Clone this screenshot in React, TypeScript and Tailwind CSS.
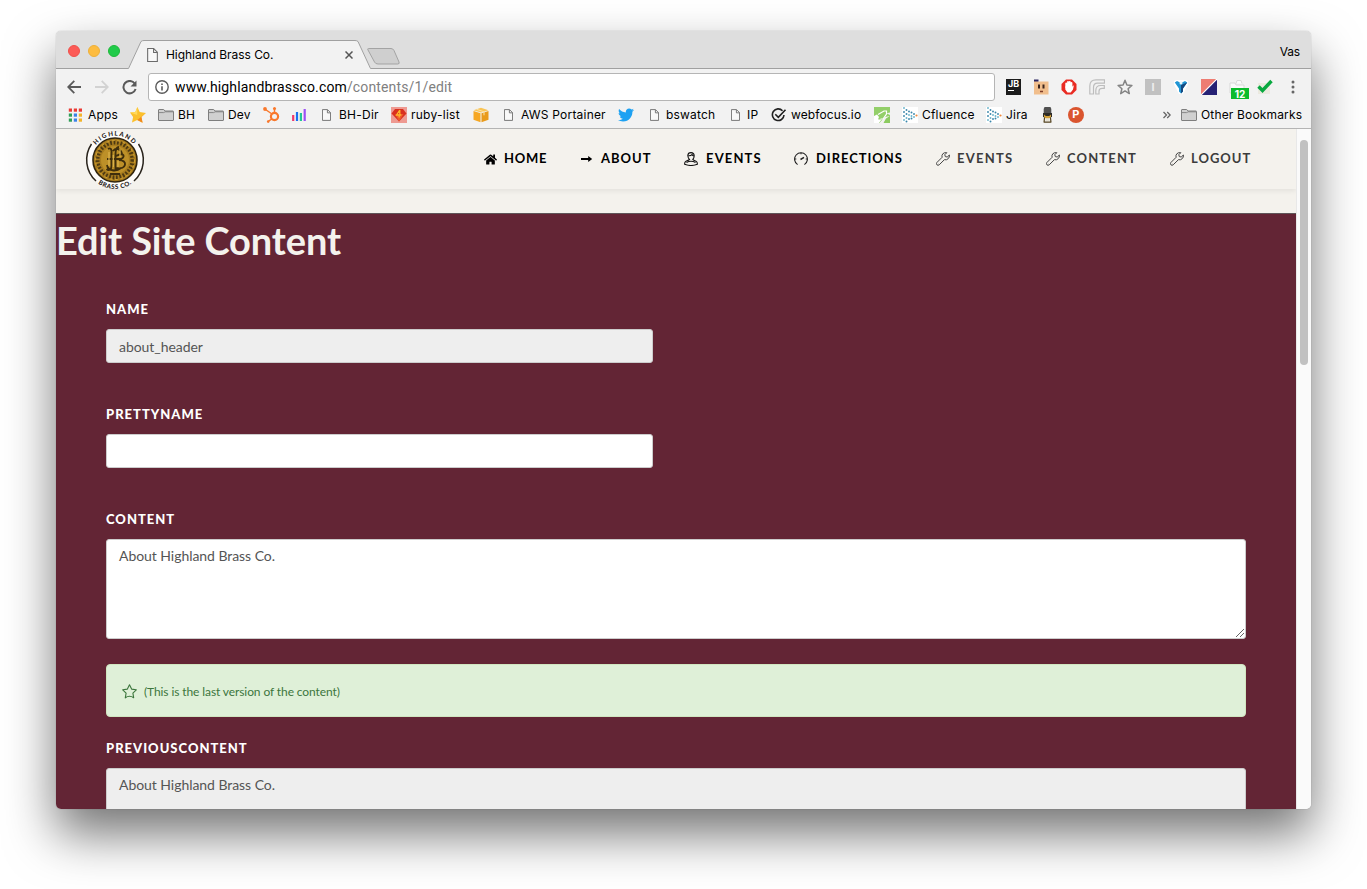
import React from "react";
import { FaHome, FaTwitter } from "react-icons/fa";

const PageIcon = ({ className }: { className: string }) => (
  <svg className={className} viewBox="0 0 10 13" fill="#f8f8f8" stroke="#6b6b6b" strokeWidth="1">
    <path d="M.5.5h5.6l3.4 3.4v8.6H.5z" />
    <path d="M6 .7v3.4h3.4" fill="none" />
  </svg>
);

const FolderIcon = () => (
  <svg className="h-4 w-4" viewBox="0 0 16 16">
    <path d="M.5 13V3Q.5 2.5 1 2.5h4.4q.6 0 .9.6l.5.9H15q.5 0 .5.5V13q0 .5-.5.5H1q-.5 0-.5-.5z" fill="#d0d0d0" stroke="#7e7e7e" />
    <path d="M1 5.6h4.6q.6 0 1-.4l.5-.4H15" fill="none" stroke="#7e7e7e" strokeWidth=".9" />
  </svg>
);

const AppsIcon = () => (
  <svg className="h-[14px] w-[14px]" viewBox="0 0 14 14">
    {["#ea3a34", "#ea3a34", "#ea3a34", "#2f9e58", "#3b82e8", "#f3b42a", "#2f9e58", "#3b82e8", "#f3b42a"].map((c, i) => (
      <rect key={i} x={(i % 3) * 5 + 0.8} y={Math.floor(i / 3) * 5 + 0.5} width="3.2" height="3.2" fill={c} />
    ))}
  </svg>
);

const StarIcon = () => (
  <svg className="h-4 w-4" viewBox="0 0 16 16">
    <path d="M7.4 0l2.3 5 6.3.9-4.6 4 1.2 5.9-5.4-2.7L2 15.6l1.1-5.5L0 5.4l5.3-.5z" fill="#fbc02c" />
    <path d="M16 5.9l-4.6 4 1.2 5.9-5.4-2.7z" fill="#f08a1c" />
    <path d="M7.4 0l-.2 8L0 5.4l5.3-.5z" fill="#ffd95a" />
  </svg>
);

const HubIcon = () => (
  <svg className="h-4 w-[17px]" viewBox="0 0 17 16" fill="none" stroke="#f9782c">
    <circle cx="11.5" cy="9.500" r="3.600" strokeWidth="2.200" />
    <path d="M2.500 2.500L9 7M11.500 1.500V6M5 14.500L9 11.800" strokeWidth="1.500" />
    <g fill="#f9782c" stroke="none">
      <circle cx="2" cy="2" r="1.900" />
      <circle cx="11.500" cy="1.600" r="1.500" />
      <circle cx="5.200" cy="14.600" r="1.300" />
    </g>
  </svg>
);

const BarsIcon = () => (
  <svg className="h-4 w-[14px]" viewBox="0 0 14 16">
    <path d="M1.200 8v6" stroke="#f0386b" strokeWidth="2.200" />
    <path d="M5 5v9" stroke="#1a6ff0" strokeWidth="2.200" />
    <path d="M8.900 6v8" stroke="#20c796" strokeWidth="2.200" />
    <path d="M12.700 2v12" stroke="#9b50f5" strokeWidth="2.200" />
  </svg>
);

const RubyIcon = () => (
  <svg className="h-4 w-4" viewBox="0 0 16 16">
    <rect width="16" height="16" fill="#ee9a92" />
    <path d="M4 2h8l3.500 4.500L8 14.500.500 6.500z" fill="#d9301f" />
    <path d="M4 7l4 7.500L12.500 7z" fill="#ee5a2c" />
    <path d="M8.800 3L5.500 8h2.700v2.500M8.800 3v5h1.500" fill="none" stroke="#ffb428" strokeWidth="1.300" />
  </svg>
);

const CubeIcon = () => (
  <svg className="h-4 w-4" viewBox="0 0 16 16">
    <path d="M.5 3.200L8 .8l7.500 2.400L8 5.600z" fill="#f9c455" />
    <path d="M.5 4l7 2.200v9L.5 12.800z" fill="#f6a723" />
    <path d="M15.500 4l-7 2.200v9l7-2.400z" fill="#e99b1c" />
    <path d="M3.500 2.300l7.500 2.500v3.500" fill="none" stroke="#fbe3ab" strokeWidth="1" />
  </svg>
);

const CheckRing = () => (
  <svg className="h-4 w-4" viewBox="0 0 16 16" fill="none" stroke="#222" strokeWidth="1.600">
    <path d="M11.500 3.800A5.800 5.800 0 1 0 13 8" />
    <path d="M4.300 7.300l3 3L14.500 2.700" />
  </svg>
);

const GreenIcon = () => (
  <svg className="h-4 w-4" viewBox="0 0 16 16">
    <path d="M0 0h16v5.500l-3.500.8L16 8v8h-6l1.500-3L16 9l-5 1-3.500 3.500L5.500 16H2l2.500-3.500L0 9z" fill="#93cf69" />
    <path d="M0 9l3-1.500 2 2.500-1 2.500h3.500L5 16H0z" fill="#fff" />
    <path d="M16 9l-4 2.500L9.500 16H16z" fill="#8ccb61" />
    <path d="M4 7.500l6-3.500h2.500v3L9 12H6.500" fill="none" stroke="#fff" strokeWidth="1.200" />
  </svg>
);

const DotsIcon = () => (
  <svg className="h-4 w-4" viewBox="0 0 16 16">
    <rect width="16" height="16" fill="#fff" />
    {[
      [2, 1], [2, 5], [2, 9], [2, 13], [4.5, 3], [4.5, 7], [4.5, 11], [4.5, 14.5], [7, 4.5], [7, 8], [7, 12], [9.5, 5.5], [9.5, 9], [9.5, 11.5], [12, 7], [12, 10],
    ].map(([x, y], i) => (
      <circle key={i} cx={x} cy={y} r=".95" fill={i % 3 ? "#3a86ab" : "#69b4cc"} />
    ))}
    <circle cx="14.500" cy="8.500" r="1.100" fill="#f0883a" />
  </svg>
);

const LampIcon = () => (
  <svg className="h-4 w-[11px]" viewBox="0 0 11 16">
    <path d="M2.500 0h6l.8 2v5h-7.600V2z" fill="#505050" />
    <path d="M1 6h9v3.500L8.500 11h-6L1 9.500z" fill="#2d2b26" />
    <path d="M2 7.500l1.800 1.500h3.400L9 7.500V10l-2 1.500H4L2 10z" fill="#d2a03a" />
    <path d="M3.500 11.500h4v2.500h-4z" fill="#e8e2d2" />
    <path d="M2.500 11l-.5 4.500M8.500 11l.5 4.500M2 15.200h7" fill="none" stroke="#54431f" strokeWidth="1.200" />
  </svg>
);

const PIcon = () => (
  <div className="flex h-4 w-4 items-center justify-center rounded-full bg-[#da552f] text-[11px] leading-none font-bold text-white">P</div>
);

type Bookmark = { slot: string; icon: React.ReactNode; label?: string; text?: string };

const bookmarks: Bookmark[] = [
  { slot: "w-[62px]", icon: <AppsIcon />, label: "Apps", text: "ml-[6px]" },
  { slot: "w-[28px]", icon: <StarIcon /> },
  { slot: "w-[50px]", icon: <FolderIcon />, label: "BH", text: "ml-[4px]" },
  { slot: "w-[55px]", icon: <FolderIcon />, label: "Dev", text: "ml-[4px]" },
  { slot: "w-[29px]", icon: <HubIcon /> },
  { slot: "w-[30px]", icon: <BarsIcon /> },
  { slot: "w-[69px]", icon: <PageIcon className="h-3 w-[9px]" />, label: "BH-Dir", text: "ml-[8px] tracking-[0.25px]" },
  { slot: "w-[82px]", icon: <RubyIcon />, label: "ruby-list", text: "ml-[4px] tracking-[0.25px]" },
  { slot: "w-[31px]", icon: <CubeIcon /> },
  { slot: "w-[114px]", icon: <PageIcon className="h-3 w-[9px]" />, label: "AWS Portainer", text: "ml-[8px]" },
  { slot: "w-[32px]", icon: <FaTwitter className="h-4 w-4 text-[#1da1f2]" /> },
  { slot: "w-[81px]", icon: <PageIcon className="h-3 w-[9px]" />, label: "bswatch", text: "ml-[7px]" },
  { slot: "w-[40px]", icon: <PageIcon className="h-3 w-[9px]" />, label: "IP", text: "ml-[7px]" },
  { slot: "w-[103px]", icon: <CheckRing />, label: "webfocus.io", text: "ml-[4px] tracking-[0.1px]" },
  { slot: "w-[28px]", icon: <GreenIcon /> },
  { slot: "w-[84px]", icon: <DotsIcon />, label: "Cfluence", text: "ml-[4px]" },
  { slot: "w-[56px]", icon: <DotsIcon />, label: "Jira", text: "ml-[4px]" },
  { slot: "w-[26px]", icon: <LampIcon /> },
  { slot: "w-[94px]", icon: <PIcon /> },
];

const TitleBar = () => (
  <div className="relative flex h-[38px] shrink-0 items-center bg-[#dedede] pl-3">
    <div className="mt-[2px] flex gap-2">
      <i className="h-3 w-3 rounded-full border border-[#f0504a] bg-[#fc5b57]" />
      <i className="h-3 w-3 rounded-full border border-[#eeb038] bg-[#fdbc40]" />
      <i className="h-3 w-3 rounded-full border border-[#1eb93a] bg-[#21cb4a]" />
    </div>
    <svg className="absolute inset-0 h-[38px] w-full" viewBox="0 0 1255 38" preserveAspectRatio="none" fill="none">
      <path d="M72 38L85 10.500Q86 9 88 9H299Q301 9 302 10.500L315 38z" fill="#f2f2f2" />
      <path d="M0 37.500H72.500L85 10.500Q86 9.500 88 9.500H299Q301 9.500 302 10.500L314.500 37.500H1255" stroke="#a0a0a0" />
      <path d="M312.500 17.500h22.500q2 0 3 2l5 11.500q.8 2-1.300 2H322q-2.500 0-3.500-2l-6.500-12q-.8-1.500.5-1.500z" fill="#cfcfcf" stroke="#a3a3a3" />
    </svg>
    <div className="relative ml-[27px] flex flex-1 items-center pt-[9px]">
      <PageIcon className="mr-[8px] h-[14px] w-[11px]" />
      <span className="w-[179px] text-[12px] tracking-[-0.05px]">Highland Brass Co.</span>
      <svg className="h-2 w-2" viewBox="0 0 8 8" stroke="#555" strokeWidth="1.500">
        <path d="M.5.5l7 7M7.500.5l-7 7" />
      </svg>
    </div>
    <span className="relative mt-1 mr-[11px] text-[12px] tracking-[-0.2px]">Vas</span>
  </div>
);

const Extensions = () => (
  <div className="ml-[10px] flex flex-1 items-center gap-3">
    <div className="flex h-4 w-4 shrink-0 flex-col border-l border-[#f2f2f2] bg-[#1c1c1c] pl-[2px] text-[9px] leading-[10px] font-bold text-white">
      JB<i className="mt-px h-px w-[6px] bg-white" />
    </div>
    <svg className="h-4 w-4 shrink-0" viewBox="0 0 16 16">
      <path d="M1 1.500h3.500v1H15.500V15.500H1z" fill="#f1be8c" />
      <path d="M1 .5h4.500v2H1z" fill="#2b2560" />
      <path d="M6 5.500v4M10.500 5.500v4" stroke="#3b241c" strokeWidth="2" />
      <path d="M7 12.500h3" stroke="#7e3c2a" strokeWidth="1.500" />
    </svg>
    <svg className="h-4 w-4 shrink-0" viewBox="0 0 16 16">
      <path d="M5 .5h6L15.500 5v6L11 15.500H5L.5 11V5z" fill="#e92b23" />
      <path d="M5.200 8V4.500M7 8V3M8.800 8V2.800M10.500 9V4" stroke="#fff" strokeWidth="1.800" strokeLinecap="round" />
      <path d="M4.300 7.500h7l1.600-1.300-.9 4.300-2.300 3H6.500l-2.200-3z" fill="#fff" />
    </svg>
    <svg className="h-4 w-4 shrink-0" viewBox="0 0 16 16" fill="none" stroke="#bdbdbd" strokeWidth="1.200">
      <path d="M.8 15V7Q.8.800 7 .8h8.500v3.400H8.500Q4.500 4.200 4.500 8.500V15zM6.800 15v-3.500q0-5 5-5h3.500v2.800H13q-3 0-3 3V15z" />
    </svg>
    <svg className="h-4 w-4 shrink-0" viewBox="0 0 16 16" fill="none" stroke="#858585" strokeWidth="1.500" strokeLinejoin="round">
      <path d="M8 1.300l1.900 4.700 5 .4-3.800 3.300 1.200 4.900L8 11.900l-4.300 2.700 1.200-4.900L1.100 6.400l5-.4z" />
    </svg>
    <div className="flex h-4 w-4 shrink-0 items-center justify-center bg-[#c1c1c1] text-[11px] font-bold text-[#ededed]">I</div>
    <svg className="h-4 w-4 shrink-0" viewBox="0 0 16 16">
      <path d="M1 2l2.500-1h9L15 2v3.500L10 15H6L1 5.500z" fill="#fff" />
      <path d="M1.800 3.500L4 2l4 2 4-2 2.200 1.500L10 9.500v3L8 14.500l-2-2v-3z" fill="#2196d4" />
      <path d="M8 6l6.200-2.500L10 9.500v3L8 14.500z" fill="#174a80" />
      <circle cx="8" cy="4" r="1.500" fill="#e9f5fb" />
    </svg>
    <svg className="h-4 w-4 shrink-0" viewBox="0 0 16 16">
      <path d="M0 0h16L0 16z" fill="#ee7c72" />
      <path d="M16 0v16H0z" fill="#262174" />
      <path d="M16 0L0 16" stroke="#fff" strokeWidth="1.200" />
    </svg>
    <div className="relative h-4 w-4 shrink-0">
      <svg className="h-4 w-4" viewBox="0 0 16 16" fill="#fbfbfb" stroke="#d9d9d9">
        <path d="M1 4h5l1 2h8v8H1zM7 4.500L8 1.500h4l1 3" />
      </svg>
      <span className="absolute top-[9px] left-[2px] flex h-[11px] w-[18px] items-center justify-center bg-[#0bbb2c] text-[10px] leading-none font-bold text-white">12</span>
    </div>
    <svg className="mr-[6px] h-4 w-4 shrink-0" viewBox="0 0 16 16">
      <path d="M1 4h12v11H1z" fill="#ebe9df" />
      <path d="M1.500 7.500l4 4L14.500 2" fill="none" stroke="#08a83f" strokeWidth="3.400" />
    </svg>
    <svg className="h-[14px] w-1 shrink-0" viewBox="0 0 4 14" fill="#666">
      <circle cx="2" cy="2" r="1.500" />
      <circle cx="2" cy="7" r="1.500" />
      <circle cx="2" cy="12" r="1.500" />
    </svg>
  </div>
);

const Toolbar = () => (
  <div className="flex h-9 shrink-0 items-center bg-[#f2f2f2] pl-[11px]">
    <svg className="mr-[14px] h-[14px] w-[14px]" viewBox="0 0 14 14" fill="none" stroke="#5a5a5a" strokeWidth="1.800">
      <path d="M14 7H1.500M7.300.9L1.200 7l6.100 6.100" />
    </svg>
    <svg className="mr-[13px] h-[14px] w-[14px]" viewBox="0 0 14 14" fill="none" stroke="#d2d2d2" strokeWidth="1.800">
      <path d="M0 7h12.500M6.700.9L12.800 7l-6.100 6.100" />
    </svg>
    <svg className="mr-[11px] h-[15px] w-[15px]" viewBox="0 0 15 15" fill="none" stroke="#5a5a5a" strokeWidth="2">
      <path d="M12.700 3.500A6.200 6.200 0 1 0 13.600 9" />
      <path d="M14.500.5v6h-6z" fill="#5a5a5a" stroke="none" />
    </svg>
    <div className="flex h-7 w-[847px] items-center rounded-[3px] border border-[#b5b5b5] bg-white pl-[6px]">
      <svg className="mr-[6px] h-[14px] w-[14px]" viewBox="0 0 14 14" fill="none" stroke="#5a5a5a" strokeWidth="1.400">
        <circle cx="7" cy="7" r="6.200" />
        <path d="M7 6.200v4.300M7 3.400v1.500" strokeWidth="1.600" />
      </svg>
      <span className="font-[Roboto,sans-serif] text-[14px] tracking-[0.14px] whitespace-nowrap text-black">
        www.highlandbrassco.com<span className="text-[#808080]">/contents/1/edit</span>
      </span>
    </div>
    <Extensions />
  </div>
);

const BookmarkBar = () => (
  <div className="flex h-6 shrink-0 items-center border-b border-[#b4b4b4] bg-[#f2f2f2] pb-[4px] pl-3 text-[12px] tracking-[0.2px] whitespace-nowrap">
    {bookmarks.map((b, i) => (
      <div key={i} className={`flex shrink-0 items-center ${b.slot}`}>
        <span className="shrink-0">{b.icon}</span>
        {b.label && <span className={b.text}>{b.label}</span>}
      </div>
    ))}
    <svg className="mr-[10px] ml-px h-2 w-2" viewBox="0 0 8 8" fill="none" stroke="#666" strokeWidth="1.300">
      <path d="M.5 1l3 3-3 3M4.200 1l3 3-3 3" />
    </svg>
    <FolderIcon />
    <span className="ml-1 tracking-[0.16px]">Other Bookmarks</span>
  </div>
);

const Logo = () => (
  <svg className="mt-px h-[60px] w-[62px] overflow-visible" viewBox="0 1 62 60">
    <circle cx="31" cy="31" r="28" fill="#fdfcfa" />
    <path d="M7.500 15A28.500 28.500 0 0 0 12 52M54.500 15A28.500 28.500 0 0 1 50 52" fill="none" stroke="#2a251d" strokeWidth="1.500" />
    <circle cx="31" cy="31" r="22" fill="#a87c1e" stroke="#30250f" strokeWidth="1.600" />
    <circle cx="31" cy="31" r="17.500" fill="none" stroke="#4e3a12" strokeWidth="4" strokeDasharray="1.800 1.700" />
    <circle cx="31" cy="31" r="19.500" fill="none" stroke="#c99b30" strokeWidth="1.200" strokeDasharray="3 2.500" />
    <circle cx="31" cy="31" r="14" fill="#bd9028" />
    <path d="M24 20c3-2 4 1 3.500 5v12c0 4-3 5-5 3M35 18c-3 0-3.500 3-3.500 7v17M23 30h14M32 27c9-5 10 2 3 4 9 0 8 10-3 8M26 45h10M29 22c3-4 8-2 9 3M23 36c1 6 9 7 14 3" fill="none" stroke="#3f2e0c" strokeWidth="1.900" />
    <path d="M25 23v14M36 20v8M29.300 26v12M34 32v6" stroke="#deb54c" strokeWidth="1.200" />
    <defs>
      <path id="logo-top" d="M6.700 31a24.300 24.300 0 0 1 48.600 0" />
      <path id="logo-bottom" d="M2 31a29 29 0 0 0 58 0" />
    </defs>
    <g fill="#29241c" fontFamily="Lato, sans-serif" fontWeight="900" fontSize="6.300" textAnchor="middle">
      <text letterSpacing="1.300"><textPath href="#logo-top" startOffset="50%">HIGHLAND</textPath></text>
      <text letterSpacing=".5"><textPath href="#logo-bottom" startOffset="50%">BRASS CO.</textPath></text>
    </g>
  </svg>
);

const ArrowIcon = () => (
  <svg className="h-[14px] w-3" viewBox="0 0 12 14">
    <path d="M0 7h8" stroke="#000" strokeWidth="1.800" />
    <path d="M7.200 4L11.200 7l-4 3z" />
  </svg>
);

const PersonIcon = () => (
  <svg className="h-[14px] w-[14px]" viewBox="0 0 14 14" fill="none" stroke="#111" strokeWidth="1.100">
    <path d="M3.800 3.500Q4 .6 7 .6T10.200 3.800Q10.200 6 8.800 7.300 10 8.500 12 9.200q1.500.7 1.400 3Q10 13.500 7 13.500T.6 12.200Q.5 10 2 9.200 4.300 8.500 5.500 7.500 4 6 3.800 3.500z" />
    <path d="M4.200 3.800Q7 4 8 2.500q.5 1.200 2 1.500M2.500 10.500q4.500-2.500 9 0" />
  </svg>
);

const GaugeIcon = () => (
  <svg className="h-[14px] w-[14px]" viewBox="0 0 14 14" fill="none" stroke="#222" strokeWidth="1.100">
    <path d="M3.600 12.600A6.400 6.400 0 1 1 10.400 12.600" />
    <path d="M6.500 7.500l3.500-2.200" strokeWidth="1.500" />
    <path d="M7 .8v1.500M.8 7h1.500M11.700 7h1.500" />
  </svg>
);

const WrenchIcon = () => (
  <svg className="h-[14px] w-[14px]" viewBox="0 0 14 14" fill="none" stroke="#444" strokeWidth="1" strokeLinejoin="round">
    <path d="M10.800.7Q8.300.2 6.800 1.800 5.500 3.300 6.100 5.300L.9 10.500q-1 1.200 0 2.300 1.200 1 2.300 0L8.400 7.700q2.200.6 3.800-1 1.500-1.500 1.200-3.700l-2.200 2-1.900-.4-.5-1.900z" />
    <path d="M2 11.800h.2" />
  </svg>
);

const navItems = [
  { slot: "w-[97px]", icon: <FaHome className="h-[13px] w-[13px]" />, gap: "ml-[7px]", label: "HOME", tone: "tracking-[0.7px] text-black" },
  { slot: "w-[103px]", icon: <ArrowIcon />, gap: "ml-[8px]", label: "ABOUT", tone: "tracking-[1px] text-black" },
  { slot: "w-[110px]", icon: <PersonIcon />, gap: "ml-[8px]", label: "EVENTS", tone: "tracking-[1.15px] text-black" },
  { slot: "w-[142px]", icon: <GaugeIcon />, gap: "ml-[8px]", label: "DIRECTIONS", tone: "tracking-[0.95px] text-black" },
  { slot: "w-[110px]", icon: <WrenchIcon />, gap: "ml-[7px]", label: "EVENTS", tone: "tracking-[1.25px] text-[#3c3c3c]" },
  { slot: "w-[124px]", icon: <WrenchIcon />, gap: "ml-[7px]", label: "CONTENT", tone: "tracking-[1.15px] text-[#3c3c3c]" },
  { slot: "w-[126px]", icon: <WrenchIcon />, gap: "ml-[7px]", label: "LOGOUT", tone: "tracking-[1px] text-[#3c3c3c]" },
];

const SiteHeader = () => (
  <div className="h-[84px] shrink-0 bg-[#f4f2ed]">
    <header className="flex h-[60px] items-center justify-between pl-7 shadow-[0_2px_5px_rgba(0,0,0,0.07)]">
      <Logo />
      <nav className="flex">
        {navItems.map((n, i) => (
          <a key={i} className={`flex shrink-0 items-center text-[13px] font-bold ${n.slot} ${n.tone}`}>
            {n.icon}
            <span className={n.gap}>{n.label}</span>
          </a>
        ))}
      </nav>
    </header>
  </div>
);

const Label = ({ children }: { children: React.ReactNode }) => (
  <label className="mb-[10px] block h-5 text-[13px] leading-5 font-black tracking-[1px] text-white">{children}</label>
);

export default function App() {
  return (
    <div className="flex h-[889px] w-[1367px] overflow-hidden bg-white pt-[31px] pl-[56px] font-[Inter,sans-serif] text-black">
      <div className="flex h-[778px] w-[1255px] flex-col overflow-hidden rounded-[5px] shadow-[0_0_1px_rgba(0,0,0,0.4),0_25px_50px_rgba(0,0,0,0.55)]">
        <TitleBar />
        <Toolbar />
        <BookmarkBar />
        <div className="flex min-h-0 flex-1 font-[Lato,sans-serif]">
          <main className="flex min-w-0 flex-1 flex-col overflow-hidden bg-[#632535]">
            <SiteHeader />
            <section className="flex-1 border-t border-[#5f5558]">
              <h1 className="h-[85px] pt-px text-[38px] leading-[50px] font-bold tracking-[-0.12px] text-[#f4f2ed]">Edit Site Content</h1>
              <form className="px-[50px] text-[14px] tracking-[-0.05px] text-[#555]">
                <div className="h-[105px]">
                  <Label>NAME</Label>
                  <div className="flex h-[34px] w-[547px] items-center rounded-[3px] border border-[#ccc] bg-[#eee] px-3 pt-px">about_header</div>
                </div>
                <div className="h-[105px]">
                  <Label>PRETTYNAME</Label>
                  <div className="h-[34px] w-[547px] rounded-[3px] border border-[#ccc] bg-white" />
                </div>
                <Label>CONTENT</Label>
                <div className="flex h-[100px] items-start justify-between rounded-[3px] border border-[#ccc] bg-white pl-3">
                  <span className="pt-[6px] leading-5">About Highland Brass Co.</span>
                  <svg className="mr-px mb-px h-2 w-2 self-end" viewBox="0 0 8 8" stroke="#555" strokeWidth=".9">
                    <path d="M0 8L8 0M4 8l4-4" />
                  </svg>
                </div>
                <div className="mt-[25px] mb-[21px] flex h-[53px] items-center rounded-[4px] border border-[#d0e6c0] bg-[#dff0d8] pl-[15px] text-[12px] tracking-[-0.1px] text-[#3c763d]">
                  <svg className="mt-px mr-[7px] h-[15px] w-[15px]" viewBox="0 0 15 15" fill="none" stroke="#3c763d" strokeWidth="1.100" strokeLinejoin="round">
                    <path d="M7.500.8l2.100 4.300 4.700.7-3.400 3.300.8 4.700q-2-1.600-4.200-1.600t-4.200 1.600l.8-4.700L.7 5.800l4.700-.7z" />
                  </svg>
                  <span className="pt-[2px]">(This is the last version of the content)</span>
                </div>
                <Label>PREVIOUSCONTENT</Label>
                <div className="h-[100px] rounded-[3px] border border-[#ccc] bg-[#eee] px-3 pt-[6px] leading-5">About Highland Brass Co.</div>
              </form>
            </section>
          </main>
          <aside className="w-[15px] shrink-0 border-l border-[#e8e8e8] bg-[#fafafa] pt-[11px] pl-[3px]">
            <div className="h-[225px] w-2 rounded-full bg-[#c1c1c1]" />
          </aside>
        </div>
      </div>
    </div>
  );
}
